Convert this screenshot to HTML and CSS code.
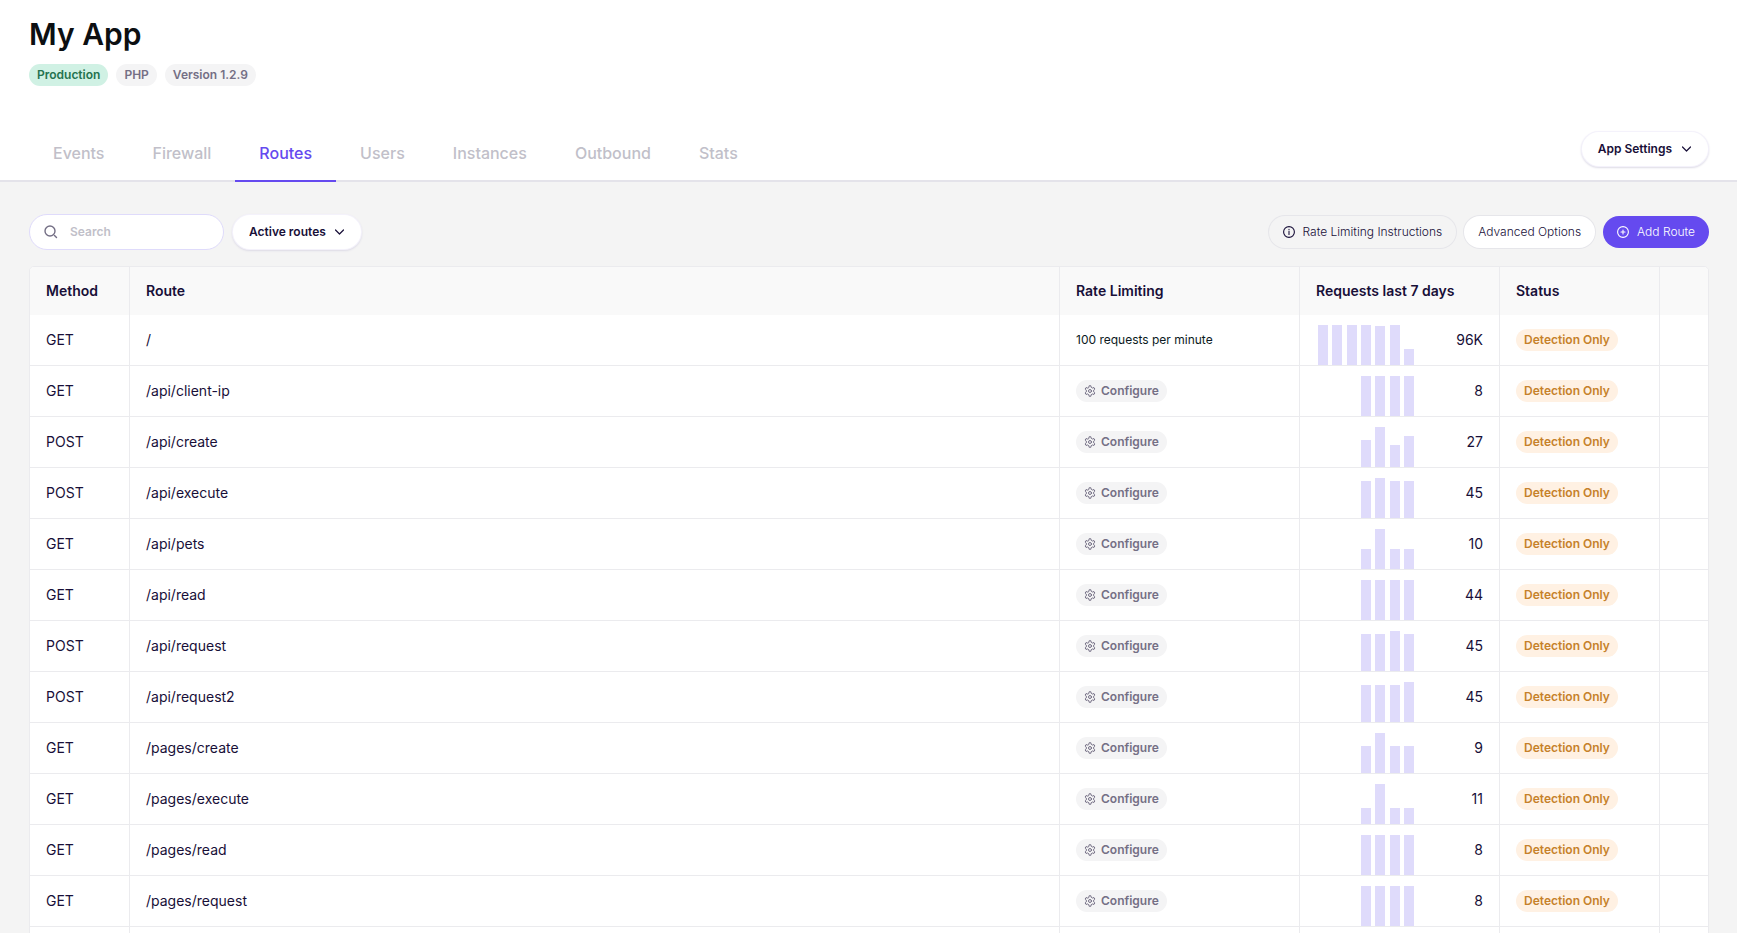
FILE: index.html
```html
<!DOCTYPE html>
<html lang="en">
<head>
<meta charset="utf-8">
<title>My App – Routes</title>
<link rel="stylesheet" href="styles.css">
</head>
<body>
<svg class="sprite" aria-hidden="true">
  <symbol id="gear" viewBox="0 0 24 24"><path d="M9.6 4.6 10.3 1.500h3.400l.7 3.100 2.600 1.500 3-1 1.700 3-2.300 2.100v3.600l2.300 2.100-1.700 3-3-1-2.600 1.500-.7 3.100h-3.400l-.7-3.100L7 17.900l-3 1-1.700-3 2.300-2.100v-3.600L2.300 8.100l1.700-3 3 1z"/><circle cx="12" cy="12" r="3"/></symbol>
  <symbol id="chevron" viewBox="0 0 9 6"><path d="M.5 1l4 4 4-4"/></symbol>
</svg>
<header class="header">
  <div class="wrap">
    <h1 class="title">My App</h1>
    <div class="tags">
      <span class="pill pill-green">Production</span>
      <span class="pill">PHP</span>
      <span class="pill">Version 1.2.9</span>
    </div>
    <div class="navbar">
      <nav class="tabs">
        <a class="tab" href="#">Events</a>
        <a class="tab" href="#">Firewall</a>
        <a class="tab tab-active" href="#" aria-current="page">Routes</a>
        <a class="tab" href="#">Users</a>
        <a class="tab" href="#">Instances</a>
        <a class="tab" href="#">Outbound</a>
        <a class="tab" href="#">Stats</a>
      </nav>
      <button class="menu-button" type="button">App Settings <svg class="chevron"><use href="#chevron"/></svg></button>
    </div>
  </div>
</header>
<main class="wrap main">
  <div class="toolbar">
    <label class="search">
      <svg class="search-icon" viewBox="0 0 14 14"><circle cx="6" cy="6" r="5"/><path d="M10.500 10.500 12.500 12.500"/></svg>
      <input class="search-input" type="text" placeholder="Search" aria-label="Search">
    </label>
    <div class="filter">
      <select class="filter-select" aria-label="Filter routes"><option>Active routes</option></select>
      <svg class="chevron filter-chevron"><use href="#chevron"/></svg>
    </div>
    <div class="actions">
      <button class="button button-ghost" type="button"><svg class="button-icon" viewBox="0 0 12 12"><circle cx="6" cy="6" r="5.400"/><path d="M6 5.300v3.200M6 3.200v.5"/></svg>Rate Limiting Instructions</button>
      <button class="button" type="button">Advanced Options</button>
      <button class="button button-primary" type="button"><svg class="button-icon" viewBox="0 0 12 12"><circle cx="6" cy="6" r="5.400"/><path d="M6 4v4M4 6h4"/></svg>Add Route</button>
    </div>
  </div>
  <div class="table-frame">
  <table class="routes">
    <colgroup><col class="col-method"><col><col class="col-rate"><col class="col-requests"><col class="col-status"><col class="col-menu"></colgroup>
    <thead><tr><th>Method</th><th>Route</th><th>Rate Limiting</th><th>Requests last 7 days</th><th>Status</th><th></th></tr></thead>
    <tbody>
      <tr><td>GET</td><td>/</td><td class="limit">100 requests per minute</td><td><div class="requests"><div class="chart"><i style="height:100%"></i><i style="height:100%"></i><i style="height:100%"></i><i style="height:99%"></i><i style="height:98%"></i><i style="height:100%"></i><i style="height:41%"></i></div>96K</div></td><td><span class="pill pill-amber">Detection Only</span></td><td></td></tr>
      <tr><td>GET</td><td>/api/client-ip</td><td><button class="pill" type="button"><svg class="gear"><use href="#gear"/></svg>Configure</button></td><td><div class="requests"><div class="chart"><i></i><i></i><i></i><i style="height:100%"></i><i style="height:100%"></i><i style="height:100%"></i><i style="height:100%"></i></div>8</div></td><td><span class="pill pill-amber">Detection Only</span></td><td></td></tr>
      <tr><td>POST</td><td>/api/create</td><td><button class="pill" type="button"><svg class="gear"><use href="#gear"/></svg>Configure</button></td><td><div class="requests"><div class="chart"><i></i><i></i><i></i><i style="height:67%"></i><i style="height:100%"></i><i style="height:56%"></i><i style="height:78%"></i></div>27</div></td><td><span class="pill pill-amber">Detection Only</span></td><td></td></tr>
      <tr><td>POST</td><td>/api/execute</td><td><button class="pill" type="button"><svg class="gear"><use href="#gear"/></svg>Configure</button></td><td><div class="requests"><div class="chart"><i></i><i></i><i></i><i style="height:92%"></i><i style="height:100%"></i><i style="height:92%"></i><i style="height:92%"></i></div>45</div></td><td><span class="pill pill-amber">Detection Only</span></td><td></td></tr>
      <tr><td>GET</td><td>/api/pets</td><td><button class="pill" type="button"><svg class="gear"><use href="#gear"/></svg>Configure</button></td><td><div class="requests"><div class="chart"><i></i><i></i><i></i><i style="height:50%"></i><i style="height:100%"></i><i style="height:50%"></i><i style="height:50%"></i></div>10</div></td><td><span class="pill pill-amber">Detection Only</span></td><td></td></tr>
      <tr><td>GET</td><td>/api/read</td><td><button class="pill" type="button"><svg class="gear"><use href="#gear"/></svg>Configure</button></td><td><div class="requests"><div class="chart"><i></i><i></i><i></i><i style="height:100%"></i><i style="height:100%"></i><i style="height:100%"></i><i style="height:100%"></i></div>44</div></td><td><span class="pill pill-amber">Detection Only</span></td><td></td></tr>
      <tr><td>POST</td><td>/api/request</td><td><button class="pill" type="button"><svg class="gear"><use href="#gear"/></svg>Configure</button></td><td><div class="requests"><div class="chart"><i></i><i></i><i></i><i style="height:92%"></i><i style="height:92%"></i><i style="height:100%"></i><i style="height:92%"></i></div>45</div></td><td><span class="pill pill-amber">Detection Only</span></td><td></td></tr>
      <tr><td>POST</td><td>/api/request2</td><td><button class="pill" type="button"><svg class="gear"><use href="#gear"/></svg>Configure</button></td><td><div class="requests"><div class="chart"><i></i><i></i><i></i><i style="height:92%"></i><i style="height:92%"></i><i style="height:92%"></i><i style="height:100%"></i></div>45</div></td><td><span class="pill pill-amber">Detection Only</span></td><td></td></tr>
      <tr><td>GET</td><td>/pages/create</td><td><button class="pill" type="button"><svg class="gear"><use href="#gear"/></svg>Configure</button></td><td><div class="requests"><div class="chart"><i></i><i></i><i></i><i style="height:67%"></i><i style="height:100%"></i><i style="height:67%"></i><i style="height:67%"></i></div>9</div></td><td><span class="pill pill-amber">Detection Only</span></td><td></td></tr>
      <tr><td>GET</td><td>/pages/execute</td><td><button class="pill" type="button"><svg class="gear"><use href="#gear"/></svg>Configure</button></td><td><div class="requests"><div class="chart"><i></i><i></i><i></i><i style="height:40%"></i><i style="height:100%"></i><i style="height:40%"></i><i style="height:40%"></i></div>11</div></td><td><span class="pill pill-amber">Detection Only</span></td><td></td></tr>
      <tr><td>GET</td><td>/pages/read</td><td><button class="pill" type="button"><svg class="gear"><use href="#gear"/></svg>Configure</button></td><td><div class="requests"><div class="chart"><i></i><i></i><i></i><i style="height:100%"></i><i style="height:100%"></i><i style="height:100%"></i><i style="height:100%"></i></div>8</div></td><td><span class="pill pill-amber">Detection Only</span></td><td></td></tr>
      <tr><td>GET</td><td>/pages/request</td><td><button class="pill" type="button"><svg class="gear"><use href="#gear"/></svg>Configure</button></td><td><div class="requests"><div class="chart"><i></i><i></i><i></i><i style="height:100%"></i><i style="height:100%"></i><i style="height:100%"></i><i style="height:100%"></i></div>8</div></td><td><span class="pill pill-amber">Detection Only</span></td><td></td></tr>
      <tr><td></td><td></td><td></td><td></td><td></td><td></td></tr>
    </tbody>
  </table>
  </div>
</main>
</body>
</html>
```

FILE: styles.css
```css
* { box-sizing: border-box; }

body {
  margin: 0;
  height: 100vh;
  overflow: hidden;
  background: #f4f4f4;
  color: #180f38;
  font-family: Inter, "Liberation Sans", sans-serif;
  font-size: 14px;
  line-height: 20px;
}

button, input, select { font: inherit; color: inherit; border: 0; margin: 0; }
svg { fill: none; stroke: currentColor; stroke-linecap: round; stroke-linejoin: round; flex: none; }
.sprite { display: none; }

.wrap { padding: 0 28px 0 29px; }

.header { background: #fff; border-bottom: 2px solid #e4e3ea; }
.title { margin: 0; padding-top: 16px; font-size: 30px; line-height: 36px; font-weight: 600; color: #0c0f12; }
.tags { display: flex; gap: 8px; margin-top: 12px; }

.pill {
  display: inline-flex;
  align-items: center;
  height: 22px;
  padding: 0 8px;
  border-radius: 11px;
  background: #f4f4f5;
  color: #746f85;
  font-size: 12px;
  line-height: 22px;
  font-weight: 600;
  vertical-align: middle;
  white-space: nowrap;
}
.pill-green { background: #d0f1e4; color: #24734f; }
.pill-amber { background: #fff1e3; color: #c6812a; }
.gear { width: 12px; height: 12px; margin-right: 5px; stroke-width: 2; }
button.pill { cursor: pointer; }

.navbar { display: flex; justify-content: space-between; align-items: flex-end; margin-top: 40px; }
.tabs { display: flex; margin-bottom: -2px; }
.tab {
  padding: 15px 24px;
  border-bottom: 2px solid transparent;
  color: #c1bfc9;
  font-size: 16px;
  line-height: 24px;
  font-weight: 500;
  text-decoration: none;
}
.tab-active { color: #654aef; border-color: #654aef; }

.menu-button, .filter {
  height: 34px;
  border-radius: 17px;
  background: #fff;
  box-shadow: 0 0 0 1px #f4f2fb, 0 1px 2px 1px #dddbe6;
  font-size: 12px;
  font-weight: 600;
}
.menu-button { display: flex; align-items: center; gap: 10px; padding: 0 17px 0 16px; margin: 0 1px 14px; }
.chevron { width: 9px; height: 6px; stroke-width: 1.2; overflow: visible; }

.main { padding-top: 32px; }
.toolbar { display: flex; align-items: center; gap: 8px; margin-bottom: 16px; }

.search {
  display: flex;
  align-items: center;
  gap: 12px;
  width: 195px;
  height: 36px;
  padding: 0 14px;
  border: 1px solid #dfdbfb;
  border-radius: 18px;
  background: #fff;
}
.search-icon { width: 14px; height: 14px; color: #746f85; stroke-width: 1.4; }
.search-input { flex: 1; min-width: 0; padding: 0; background: none; outline: 0; font-size: 12px; font-weight: 600; }
.search-input::placeholder { color: #c1bfc9; opacity: 1; }

.filter { position: relative; width: 128px; margin-left: 1px; }
.filter-select { appearance: none; width: 100%; height: 100%; padding: 0 16px; border-radius: 17px; background: none; }
.filter-chevron { position: absolute; right: 17px; top: 14px; pointer-events: none; }

.actions { display: flex; gap: 8px; margin-left: auto; }
.button {
  display: flex;
  align-items: center;
  gap: 8px;
  height: 32px;
  padding: 0 14px;
  border-radius: 16px;
  background: #fff;
  box-shadow: 0 0 0 1px #e6e6ea;
  font-size: 12px;
  font-weight: 300;
}
.button-icon { width: 12px; height: 12px; stroke-width: 1.1; overflow: visible; }
.button-ghost { background: none; }
.button-primary { background: #654aef; color: #fff; box-shadow: none; }

.table-frame { border: 1px solid #ebebee; border-radius: 5px; overflow: hidden; background: #fff; }
.routes { width: 100%; table-layout: fixed; border-collapse: separate; border-spacing: 0; }
.col-method { width: 100px; }
.col-rate { width: 240px; }
.col-requests { width: 200px; }
.col-status { width: 160px; }
.col-menu { width: 48px; }
.routes th { height: 48px; padding: 0 16px; background: #f9f9f9; text-align: left; font-weight: 600; }
.routes td { height: 51px; padding: 0 16px; border-bottom: 1px solid #ebebee; }
.routes th:not(:last-child), .routes td:not(:last-child) { border-right: 1px solid #ebebee; }
.routes .limit { font-size: 12px; color: #0c1a22; }

.requests { display: flex; align-items: center; justify-content: space-between; height: 50px; }
.chart { display: grid; grid-template-columns: repeat(7, 1fr); align-items: end; align-self: flex-end; width: 100px; height: 40px; }
.chart i { justify-self: center; width: 10px; background: #dfdbfb; }
```
